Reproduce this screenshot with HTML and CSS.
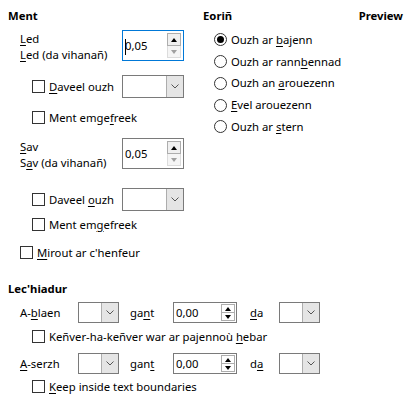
FILE: index.html
```html
<!DOCTYPE html>
<html>
<head>
<meta charset="utf-8">
<link rel="stylesheet" href="styles.css">
</head>
<body>
<div class="page">
  <div class="top">
    <section class="size">
      <h3 class="heading">Ment</h3>
      <div class="dim-row row-led">
        <div class="dim-labels">
          <span><u>L</u>ed</span>
          <span><u>L</u>ed (da vihanañ)</span>
        </div>
        <div class="spin spin-big focused">
          <span class="spin-value"><span class="caret"></span>0,05</span>
          <span class="spin-btns">
            <span class="spin-btn"><span class="tri-up"></span></span>
            <span class="spin-btn disabled"><span class="tri-down"></span></span>
          </span>
        </div>
      </div>
      <div class="opt-row row-b">
        <label class="check check-wide"><span class="box"></span><span><u>D</u>aveel ouzh</span></label>
        <div class="dd dd-wide"><span class="dd-field"></span><span class="dd-btn"><svg width="8" height="5" viewBox="0 0 8 5"><polyline points="0.5,0.5 4,4 7.5,0.5" fill="none" stroke="#555" stroke-width="1"/></svg></span></div>
      </div>
      <label class="check check-line row-c"><span class="box"></span><span>Ment emge<u>f</u>reek</span></label>

      <div class="dim-row row-d">
        <div class="dim-labels">
          <span><u>S</u>av</span>
          <span>S<u>a</u>v (da vihanañ)</span>
        </div>
        <div class="spin spin-big">
          <span class="spin-value">0,05</span>
          <span class="spin-btns">
            <span class="spin-btn"><span class="tri-up"></span></span>
            <span class="spin-btn disabled"><span class="tri-down"></span></span>
          </span>
        </div>
      </div>
      <div class="opt-row row-e">
        <label class="check check-wide"><span class="box"></span><span>Daveel <u>o</u>uzh</span></label>
        <div class="dd dd-wide"><span class="dd-field"></span><span class="dd-btn"><svg width="8" height="5" viewBox="0 0 8 5"><polyline points="0.5,0.5 4,4 7.5,0.5" fill="none" stroke="#555" stroke-width="1"/></svg></span></div>
      </div>
      <label class="check check-line row-f"><span class="box"></span><span>Ment em<u>g</u>efreek</span></label>
      <label class="check check-line row-g outer"><span class="box"></span><span><u>M</u>irout ar c'henfeur</span></label>
    </section>

    <section class="anchor">
      <h3 class="heading">Eoriñ</h3>
      <div class="radios">
        <label class="radio"><span class="circle checked"></span><span>Ouzh ar <u>b</u>ajenn</span></label>
        <label class="radio"><span class="circle"></span><span>Ouzh ar rann<u>b</u>ennad</span></label>
        <label class="radio"><span class="circle"></span><span>Ouzh an <u>a</u>rouezenn</span></label>
        <label class="radio"><span class="circle"></span><span><u>E</u>vel arouezenn</span></label>
        <label class="radio"><span class="circle"></span><span>Ouzh ar <u>s</u>tern</span></label>
      </div>
    </section>

    <section class="preview">
      <h3 class="heading">Preview</h3>
    </section>
  </div>

  <section class="position">
    <h3 class="heading">Lec'hiadur</h3>
    <div class="pos-row row-h">
      <span class="pos-label">A-<u>b</u>laen</span>
      <div class="dd dd-small"><span class="dd-field"></span><span class="dd-btn"><svg width="8" height="5" viewBox="0 0 8 5"><polyline points="0.5,0.5 4,4 7.5,0.5" fill="none" stroke="#555" stroke-width="1"/></svg></span></div>
      <span class="pos-by">ga<u>n</u>t</span>
      <div class="spin spin-small">
        <span class="spin-value">0,00</span>
        <span class="spin-btns">
          <span class="spin-btn"><span class="tri-up"></span></span>
          <span class="spin-btn"><span class="tri-down"></span></span>
        </span>
      </div>
      <span class="pos-to"><u>d</u>a</span>
      <div class="dd dd-small"><span class="dd-field"></span><span class="dd-btn"><svg width="8" height="5" viewBox="0 0 8 5"><polyline points="0.5,0.5 4,4 7.5,0.5" fill="none" stroke="#555" stroke-width="1"/></svg></span></div>
    </div>
    <label class="check check-line row-i"><span class="box"></span><span>Keñver-ha-keñver war ar pajennoù <u>h</u>ebar</span></label>
    <div class="pos-row row-j">
      <span class="pos-label"><u>A</u>-serzh</span>
      <div class="dd dd-small"><span class="dd-field"></span><span class="dd-btn"><svg width="8" height="5" viewBox="0 0 8 5"><polyline points="0.5,0.5 4,4 7.5,0.5" fill="none" stroke="#555" stroke-width="1"/></svg></span></div>
      <span class="pos-by">gan<u>t</u></span>
      <div class="spin spin-small">
        <span class="spin-value">0,00</span>
        <span class="spin-btns">
          <span class="spin-btn"><span class="tri-up"></span></span>
          <span class="spin-btn"><span class="tri-down"></span></span>
        </span>
      </div>
      <span class="pos-to">d<u>a</u></span>
      <div class="dd dd-small"><span class="dd-field"></span><span class="dd-btn"><svg width="8" height="5" viewBox="0 0 8 5"><polyline points="0.5,0.5 4,4 7.5,0.5" fill="none" stroke="#555" stroke-width="1"/></svg></span></div>
    </div>
    <label class="check check-line row-k"><span class="box"></span><span><u>K</u>eep inside text boundaries</span></label>
  </section>
</div>
</body>
</html>
```

FILE: styles.css
```css
* {
  box-sizing: border-box;
  margin: 0;
  padding: 0;
}

body {
  margin: 0;
  background: #ffffff;
  color: #000000;
  font-family: "Noto Sans", "Open Sans", sans-serif;
  font-size: 11.3px;
  line-height: 16px;
}

u {
  text-decoration-thickness: 1px;
  text-underline-offset: 2px;
}

.page {
  padding: 8px 10px 0 8px;
}

.heading {
  font-size: 11.3px;
  font-weight: bold;
  line-height: 16px;
}

.top {
  display: flex;
}

.size {
  width: 195px;
  display: flex;
  flex-direction: column;
  align-items: flex-start;
}

.anchor {
  flex: 1;
}

.preview {
  text-align: right;
}

/* dimension rows */
.dim-row {
  display: flex;
  padding-left: 12px;
}

.row-led {
  margin-top: 6px;
}

.row-d {
  margin-top: 12.5px;
}

.dim-labels {
  width: 102px;
  display: flex;
  flex-direction: column;
  line-height: 15.5px;
  padding-top: 1px;
}

/* spin boxes */
.spin {
  display: flex;
  align-items: stretch;
  border: 1px solid #7a7a7a;
  background: #fff;
}

.spin.focused {
  border-color: #0078d7;
}

.spin-big {
  width: 62px;
  height: 31px;
  padding: 2px 2px 2px 0;
}

.spin-small {
  width: 64px;
  height: 21px;
  padding: 1px 1px 1px 0;
}

.spin-value {
  flex: 1;
  display: flex;
  align-items: center;
  padding-left: 2px;
  position: relative;
}

.caret {
  position: absolute;
  left: 2px;
  top: 6px;
  width: 1px;
  height: 16px;
  background: #000;
}

.spin-btns {
  width: 14px;
  display: flex;
  flex-direction: column;
}

.spin-btn {
  flex: 1;
  display: flex;
  align-items: center;
  justify-content: center;
  border: 1px solid #adadad;
  background: #e1e1e1;
}

.spin-btn + .spin-btn {
  border-top: none;
}

.spin-big .spin-btn:first-child {
  background: #f0f0f0;
  border-color: #adadad;
}

.spin-btn.disabled {
  background: #f5f5f5;
  border-color: #dcdcdc;
}

.spin-small .spin-btn {
  background: #ffffff;
  border-color: #adadad;
}

.tri-up {
  width: 0;
  height: 0;
  border-left: 3px solid transparent;
  border-right: 3px solid transparent;
  border-bottom: 4px solid #000;
}

.tri-down {
  width: 0;
  height: 0;
  border-left: 3px solid transparent;
  border-right: 3px solid transparent;
  border-top: 4px solid #000;
}

.disabled .tri-down {
  border-top-color: #a0a0a0;
}

/* dropdowns */
.dd {
  display: flex;
  border: 1px solid #7a7a7a;
  background: #fff;
}

.dd-wide {
  width: 62px;
  height: 23px;
}

.dd-small {
  width: 41px;
  height: 21px;
}

.dd-field {
  flex: 1;
}

.dd-btn {
  width: 17px;
  display: flex;
  align-items: center;
  justify-content: center;
  background: #e5e5e5;
  border-left: 1px solid #adadad;
}

/* checkboxes */
.check {
  display: flex;
  align-items: center;
  gap: 4px;
  white-space: nowrap;
}

.box {
  width: 13px;
  height: 13px;
  border: 1px solid #333333;
  background: #fff;
  flex: none;
}

.check-line {
  height: 16px;
  padding-left: 24px;
}

.check-line.outer {
  padding-left: 12px;
}

.opt-row {
  display: flex;
  align-items: center;
  padding-left: 24px;
}

.check-wide {
  width: 90px;
}

.row-b {
  margin-top: 13px;
}

.row-c {
  margin-top: 11.5px;
}

.row-e {
  margin-top: 18px;
}

.row-f {
  margin-top: 5.5px;
}

.row-g {
  margin-top: 12px;
}

/* radios */
.radios {
  display: flex;
  flex-direction: column;
  padding-left: 11px;
  margin-top: 5px;
}

.radio {
  height: 21.75px;
  display: flex;
  align-items: center;
  gap: 4px;
  white-space: nowrap;
}

.circle {
  width: 13px;
  height: 13px;
  border: 1px solid #333333;
  border-radius: 50%;
  background: #fff;
  display: flex;
  align-items: center;
  justify-content: center;
  flex: none;
}

.circle.checked::after {
  content: "";
  width: 7px;
  height: 7px;
  border-radius: 50%;
  background: #000;
}

/* position */
.position {
  margin-top: 20.5px;
  display: flex;
  flex-direction: column;
  align-items: flex-start;
}

.pos-row {
  display: flex;
  align-items: center;
  padding-left: 12px;
}

.row-h {
  margin-top: 5px;
}

.row-i {
  margin-top: 5.5px;
}

.row-j {
  margin-top: 8.5px;
}

.row-k {
  margin-top: 4.5px;
}

.pos-label {
  width: 58px;
}

.pos-by {
  margin-left: 11px;
  width: 43px;
}

.pos-to {
  margin-left: 13px;
  width: 29px;
}
```
